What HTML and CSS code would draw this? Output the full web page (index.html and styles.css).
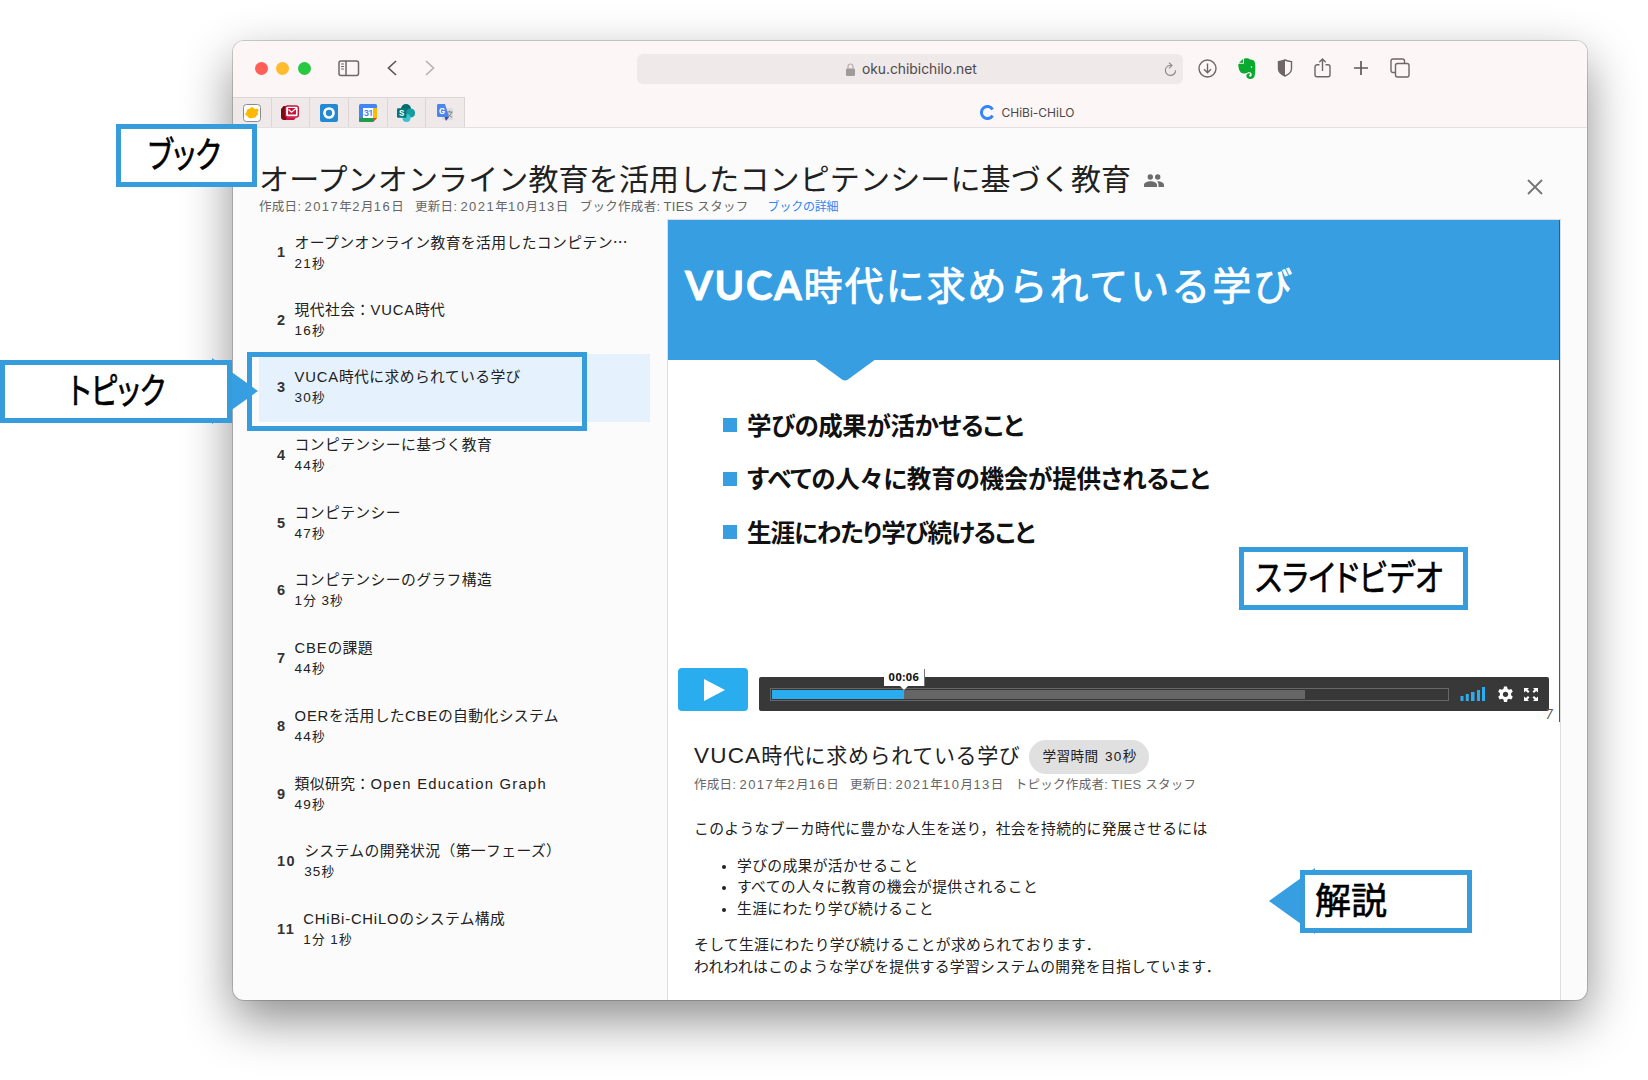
FILE: index.html
```html
<!DOCTYPE html>
<html lang="ja">
<head>
<meta charset="utf-8">
<title>CHiBi-CHiLO</title>
<link rel="stylesheet" href="styles.css">
</head>
<body>
<div class="window">
  <header class="chrome">
    <div class="toolbar">
      <div class="lights"><i class="red"></i><i class="yellow"></i><i class="green"></i></div>
      <svg class="ic-sidebar" width="22" height="17" viewBox="0 0 22 17" fill="none" stroke="#6f6667" stroke-width="1.5"><rect x="1" y="1" width="19.5" height="14.5" rx="2"/><path d="M8 1v14.500"/><path d="M3 4h3M3 6.500h3M3 9h3" stroke-width="1"/></svg>
      <svg class="ic-back" width="10" height="16" viewBox="0 0 10 16" fill="none" stroke="#5f5758" stroke-width="1.700"><path d="M9 1 1.500 8 9 15"/></svg>
      <svg class="ic-fwd" width="10" height="16" viewBox="0 0 10 16" fill="none" stroke="#b9b2b2" stroke-width="1.700"><path d="M1 1 8.500 8 1 15"/></svg>
      <div class="address">
        <svg width="9" height="13" viewBox="0 0 9 13"><rect y="5.500" width="9" height="7.500" rx="1.200" fill="#a09a9a"/><path d="M2 6V3.500a2.500 2.500 0 0 1 5 0V6" fill="none" stroke="#b5afaf" stroke-width="1.200"/></svg>
        <span>oku.chibichilo.net</span>
        <svg class="reload" width="13" height="15" viewBox="0 0 13 15" fill="none" stroke="#8d8687" stroke-width="1.100"><path d="M7.500 3.300A5.100 5.100 0 1 0 11.600 8.300M5 .700 8 3.500 5 6.300"/></svg>
      </div>
      <div class="tools">
        <svg width="19" height="19" viewBox="0 0 19 19" fill="none" stroke="#6f6667" stroke-width="1.400"><circle cx="9.500" cy="9.500" r="8.500"/><path d="M9.500 4.500v9M6 10.200l3.500 3.500 3.500-3.500"/></svg>
        <svg width="18" height="21" viewBox="0 0 18 21"><path d="M6 .800C8 0 11 .300 12 1.600c3 .100 4.500.900 4.900 3 .800 4.500.500 9.500-.300 13.400-.500 2.100-1.900 2.900-4.300 2.900-2.500 0-3.900-1.100-3.900-2.900s1.300-2.900 3.500-2.600v1.700c-1.200-.100-1.400 1.400.200 1.400 1.500 0 1.700-.900 1.500-2.600-.200-1.200-1.500-1.600-3.500-1.800-.800 1.500-3.300 1.700-5.400 1.200C1.900 14.600.700 11.300.300 7.400.100 6 .700 5.700 2 5.700h3.300c.500 0 .700-.200.700-.700z" fill="#0aaa31"/><path d="M1 4.800 5 1v3.800z" fill="#0aaa31"/><circle cx="13.500" cy="9" r=".8" fill="#fcf6f6"/></svg>
        <svg width="16" height="18" viewBox="0 0 16 18"><path d="M8 1c2 1 4 1.400 6.500 1.600v7.100c0 3.500-2.300 5.500-6.500 7.300-4.200-1.800-6.500-3.800-6.500-7.300V2.600C4 2.400 6 2 8 1z" fill="none" stroke="#6f6667" stroke-width="1.400"/><path d="M8 1v16c-4.200-1.800-6.500-3.800-6.500-7.300V2.600C4 2.400 6 2 8 1z" fill="#6f6667"/></svg>
        <svg width="17" height="20" viewBox="0 0 17 20" fill="none" stroke="#6f6667" stroke-width="1.400"><path d="M5.500 6.800H3a2 2 0 0 0-2 2v8a2 2 0 0 0 2 2h11a2 2 0 0 0 2-2v-8a2 2 0 0 0-2-2h-2.500M8.500 13V1.200M5.300 4.300l3.200-3.200 3.200 3.200"/></svg>
        <svg class="plus" width="14" height="14" viewBox="0 0 14 14" stroke="#5f5758" stroke-width="1.700"><path d="M7 0v14M0 7h14"/></svg>
        <svg class="tabs" width="20" height="20" viewBox="0 0 20 20" fill="none" stroke="#6f6667" stroke-width="1.400"><path d="M5.500 14.500H3a2 2 0 0 1-2-2V3a2 2 0 0 1 2-2h9.500a2 2 0 0 1 2 2v2.500"/><rect x="5.500" y="5.500" width="13.500" height="13.500" rx="2"/></svg>
      </div>
    </div>
    <div class="tabbar">
      <nav class="pins">
        <span><svg width="18" height="18" viewBox="0 0 18 18"><rect x=".5" y=".5" width="17" height="17" rx="3" fill="#fff" stroke="#8f8a8a"/><path d="M5 5q2 0 3-1.500 1.200-1 2.500.5 1 1.300 3 .8 2.500-.3 2 1.700-1.500 1.500-.5 3 .3 1.700-1.500 2-.5 2.500-3 2.200-2 .8-4 .3-2-.5-2.200-2.200-2.800-.8-1.800-2.500 1.500-1.200 1-2.500z" fill="#fbb901"/></svg></span>
        <span><svg width="18" height="16" viewBox="0 0 18 16"><path d="M2.500 1H5v11l7 2.500v.5H3a3 3 0 0 1-3-3V4z" fill="#7a0b16"/><rect x="4.500" y="1" width="12.800" height="11" rx="2" fill="#fff" stroke="#c8143c" stroke-width="1.400"/><path d="M7 3h8v6.500H7z" fill="#c8143c"/><path d="m7.500 4.500 3 2.800L15 3.500" fill="none" stroke="#fff" stroke-width="1.200"/><path d="M5 12.500h10L13 15H5z" fill="#c8143c"/></svg></span>
        <span><svg width="18" height="18" viewBox="0 0 18 18"><rect width="18" height="18" rx="2" fill="#228ad2"/><circle cx="9" cy="9" r="4.500" fill="none" stroke="#fff" stroke-width="2.700"/></svg></span>
        <span><svg width="18" height="18" viewBox="0 0 18 18"><rect width="18" height="18" rx="1.500" fill="#4285f4"/><path d="M14 4h4v10h-4z" fill="#fbbc04"/><path d="M0 14h14v4H1.500A1.500 1.500 0 0 1 0 16.500z" fill="#1e9b4b"/><path d="M18 14v4h-4z" fill="#efe9e9"/><path d="m14 18 4-4h-4z" fill="#ea4335"/><path d="M4 4h10v10H4z" fill="#fff"/><text x="9" y="12" text-anchor="middle" class="cal">31</text></svg></span>
        <span><svg width="18" height="18" viewBox="0 0 18 18"><circle cx="9" cy="5" r="5" fill="#036c70"/><circle cx="13.500" cy="9" r="4.600" fill="#1a9ba1"/><circle cx="9.500" cy="14" r="4" fill="#37c6d0"/><rect y="4.300" width="9.500" height="9.500" rx="1" fill="#03787c"/><text x="4.700" y="12" text-anchor="middle" class="sp">S</text></svg></span>
        <span><svg width="18" height="18" viewBox="0 0 18 18"><rect x="6" y="4" width="11" height="12" rx="1" fill="#dcdcdc"/><path d="M2 0h7l4 13H2.500A1.500 1.500 0 0 1 1 11.500V1.500A1.500 1.500 0 0 1 2 0z" fill="#4a86ee"/><path d="m8.500 13h4.500l-3 4z" fill="#3949ab"/><text x="6" y="9.500" text-anchor="middle" class="tr">G</text><path d="M11 8h5.500M13.500 6.700V8M15.500 8c-.500 2.500-2 4-3.500 5.200M12 9.500c.800 1.700 2 3 4 3.800" fill="none" stroke="#6b7a80" stroke-width=".9"/></svg></span>
      </nav>
      <div class="tab"><svg width="14" height="15" viewBox="0 0 14 15"><path d="M12.600 10.600A6 6 0 1 1 12.600 4.400" fill="none" stroke="#3487fb" stroke-width="3"/></svg><span>CHiBi-CHiLO</span></div>
    </div>
  </header>

  <main class="page">
    <div class="book-head">
      <div>
        <h1>オープンオンライン教育を活用したコンピテンシーに基づく教育<svg width="20" height="14" viewBox="0 0 20 14" fill="#6c6c6c"><circle cx="6.300" cy="3" r="2.700"/><circle cx="13.700" cy="3" r="2.700"/><path d="M0 13v-2c0-2.500 3.500-3.700 6.500-3.700S13 8.500 13 11v2zM13 7.300c3-.200 7 1 7 3.700v2h-5.500v-2c0-1.500-.500-2.700-1.500-3.700z"/></svg></h1>
        <div class="meta"><span>作成日<em>:</em><b>2017</b>年<b>2</b>月<b>16</b>日</span><span>更新日<em>:</em><b>2021</b>年<b>10</b>月<b>13</b>日</span><span>ブック作成者<em>:</em><b class="word">TIES</b> スタッフ</span><a>ブックの詳細</a></div>
      </div>
      <svg class="close" width="16" height="16" viewBox="0 0 16 16" stroke="#757575" stroke-width="1.800"><path d="m1 1 14 14M15 1 1 15"/></svg>
    </div>
    <div class="columns">
      <ol class="topics">
        <li><span class="no">1</span><div><p>オープンオンライン教育を活用したコンピテン<b class="dots">…</b></p><small><b>21</b>秒</small></div></li>
        <li><span class="no">2</span><div><p>現代社会：<b>VUCA</b>時代</p><small><b>16</b>秒</small></div></li>
        <li class="active"><span class="no">3</span><div><p><b>VUCA</b>時代に求められている学び</p><small><b>30</b>秒</small></div></li>
        <li><span class="no">4</span><div><p>コンピテンシーに基づく教育</p><small><b>44</b>秒</small></div></li>
        <li><span class="no">5</span><div><p>コンピテンシー</p><small><b>47</b>秒</small></div></li>
        <li><span class="no">6</span><div><p>コンピテンシーのグラフ構造</p><small><b>1</b>分 <b>3</b>秒</small></div></li>
        <li><span class="no">7</span><div><p><b>CBE</b>の課題</p><small><b>44</b>秒</small></div></li>
        <li><span class="no">8</span><div><p><b>OER</b>を活用した<b>CBE</b>の自動化システム</p><small><b>44</b>秒</small></div></li>
        <li><span class="no">9</span><div><p>類似研究：<b class="wide">Open Education Graph</b></p><small><b>49</b>秒</small></div></li>
        <li><span class="no">10</span><div><p>システムの開発状況（第一フェーズ）</p><small><b>35</b>秒</small></div></li>
        <li><span class="no">11</span><div><p><b>CHiBi-CHiLO</b>のシステム構成</p><small><b>1</b>分 <b>1</b>秒</small></div></li>
      </ol>
      <article class="paper">
        <section class="video">
          <div class="band"><b>VUCA</b>時代に求められている学び</div>
          <svg class="notch" width="62" height="22" viewBox="0 0 62 22"><path d="M0 0h62L34 20.500q-3 1.800-6 0z" fill="#379fe1"/></svg>
          <ul class="points">
            <li class="p1">学びの成果が活かせること</li>
            <li class="p2">すべての人々に教育の機会が提供されること</li>
            <li class="p3">生涯にわたり学び続けること</li>
          </ul>
          <div class="player">
            <div class="play"><svg width="21" height="22" viewBox="0 0 21 22"><path d="M0 0 21 11 0 22z" fill="#fff"/></svg></div>
            <div class="controls">
              <div class="track"><div class="buffer"></div><div class="played"></div><div class="time">00:06</div></div>
              <svg class="vol" width="26" height="14" viewBox="0 0 26 14" fill="#29adef"><path d="M.5 9h3v5h-3zM5.800 7h3v7h-3zM11 5h3.500v9H11zM17 3h3v11h-3zM22 0h3v14h-3z"/></svg>
              <svg class="gear" width="17" height="17" viewBox="0 0 17 17"><path d="M7 .5h3l.5 2.300 1.500.9 2.300-.8 1.500 2.700-1.700 1.600v2l1.700 1.600-1.500 2.700-2.300-.8-1.500.9-.5 2.400H7l-.5-2.400-1.500-.9-2.300.8-1.500-2.700L2.900 9.200v-2L1.200 5.600l1.500-2.700 2.300.8 1.500-.9z" fill="#fff"/><circle cx="8.500" cy="8.300" r="2.600" fill="#383838"/></svg>
              <svg width="14" height="13" viewBox="0 0 14 13" fill="#fff"><path d="M0 0h5L3.500 1.500 5.500 3.500 4 5 1.800 3 0 4.500zM14 0H9l1.500 1.500L8.500 3.500 10 5l2.200-2L14 4.500zM0 13h5l-1.500-1.500 2-2L4 8l-2.200 2L0 8.500zM14 13H9l1.500-1.500-2-2L10 8l2.200 2L14 8.500z"/></svg>
            </div>
          </div>
          <span class="page-no">7</span>
        </section>
        <section class="detail">
          <div class="topic-title"><h2><b>VUCA</b>時代に求められている学び</h2><span class="chip">学習時間 <b>30</b>秒</span></div>
          <div class="meta"><span>作成日<em>:</em><b>2017</b>年<b>2</b>月<b>16</b>日</span><span>更新日<em>:</em><b>2021</b>年<b>10</b>月<b>13</b>日</span><span>トピック作成者<em>:</em><b class="word">TIES</b> スタッフ</span></div>
          <div class="body">
            <p>このようなブーカ時代に豊かな人生を送り，社会を持続的に発展させるには</p>
            <ul><li>学びの成果が活かせること</li><li>すべての人々に教育の機会が提供されること</li><li>生涯にわたり学び続けること</li></ul>
            <p>そして生涯にわたり学び続けることが求められております．<br>われわれはこのような学びを提供する学習システムの開発を目指しています．</p>
          </div>
        </section>
      </article>
    </div>
  </main>
</div>

<div class="focus-box"></div>
<div class="callout c-book"><span>ブック</span></div>
<svg class="arrow a-topic" width="46" height="66" viewBox="0 0 46 66"><path d="M0 0 46 33 0 66z" fill="#379fe1"/></svg>
<div class="callout c-topic"><span>トピック</span></div>
<div class="callout c-video"><span>スライドビデオ</span></div>
<svg class="arrow a-note" width="46" height="66" viewBox="0 0 46 66"><path d="M46 0 0 33l46 33z" fill="#379fe1"/></svg>
<div class="callout c-note"><span>解説</span></div>
</body>
</html>
```
FILE: styles.css
```css
* { box-sizing: border-box; }
html, body { margin: 0; height: 1080px; overflow: hidden; background: #fff; }
body {
  position: relative;
  padding: 41px 0 0 233px;
  font-family: "Liberation Sans", "Noto Sans CJK JP", sans-serif;
  color: #212121;
}
svg { display: block; flex: none; }
b { font-weight: inherit; }
h1, h2, p, ol, ul { margin: 0; padding: 0; font-weight: 400; }

.window {
  width: 1354px; height: 959px;
  display: flex; flex-direction: column;
  border-radius: 11px; overflow: hidden;
  background: #fbfbfb;
  box-shadow: 0 0 0 1px rgba(0,0,0,.17), 0 20px 50px rgba(0,0,0,.45);
}

/* Browser chrome */
.chrome { flex: none; height: 87px; background: #fcf6f6; border-bottom: 1px solid #e4e0e0; }
.toolbar { height: 56px; display: flex; align-items: center; padding-left: 21.500px; }
.lights { display: flex; gap: 8.500px; width: 83.500px; }
.lights i { width: 13px; height: 13px; border-radius: 50%; }
.lights, .ic-sidebar, .ic-back, .ic-fwd, .tools { margin-bottom: 1.500px; }
.red { background: #ff5f57; }
.yellow { background: #febc2e; }
.green { background: #28c840; }
.ic-back { margin-left: 27px; }
.ic-fwd { margin-left: 28px; }
.address {
  display: flex; align-items: center; justify-content: flex-start;
  width: 546px; height: 30px; margin-left: 202px; padding: 0 6px 0 209px;
  border-radius: 6px; background: #efe9e9; color: #4d4748;
  font: 13.800px/30px Inter, sans-serif;
}
.address span { margin-left: 7px; }
.reload { margin-left: auto; }
.tools { display: flex; align-items: center; margin-left: 15px; gap: 21px; }
.plus { margin-left: 2px; }
.tabs { margin-left: 1px; }
.tabbar { display: flex; height: 30px; }
.pins { display: flex; width: 232px; border-top: 1px solid #dcd6d6; background: #efe9e9; }
.pins span { width: 38.660px; display: flex; align-items: center; justify-content: center; border-right: 1.500px solid #dcd6d6; }
.cal { font: bold 8px Inter, sans-serif; fill: #4285f4; }
.sp { font: bold 8px Inter, sans-serif; fill: #fff; }
.tr { font: bold 8px Inter, sans-serif; fill: #fff; }
.tab { flex: 1; display: flex; align-items: center; justify-content: center; gap: 7px; padding-left: 3px; font: 12px/31px Inter, sans-serif; color: #4d4748; }

/* Book page */
.page { flex: 1; display: flex; flex-direction: column; min-height: 0; }
.book-head { height: 91px; padding: 33px 44px 0 26px; display: flex; justify-content: space-between; }
h1 { display: flex; align-items: center; font-size: 30px; line-height: 38px; letter-spacing: .14px; }
h1 svg { margin: 2px 0 0 13px; }
.close { margin-top: 18px; }
.meta { display: flex; gap: 11px; font-size: 12.500px; line-height: 16px; letter-spacing: .3px; color: #666; white-space: nowrap; }
.meta b { font-size: 13px; letter-spacing: 1.500px; }
.meta .word { letter-spacing: .3px; }
.meta em { display: inline-block; width: 7px; font-style: normal; }
.meta a { margin-left: 8px; font-size: 12px; letter-spacing: -.2px; color: #2f86f6; }
.columns { flex: 1; display: flex; min-height: 0; }
.topics { width: 434px; padding: 0 17px 0 26px; list-style: none; }
.topics li { display: flex; height: 67.700px; padding: 12px 0 0 18px; }
.topics .active { background: #e5f1fd; }
.no { margin: 11px 8px 0 0; font: bold 14.500px/20px "Liberation Sans", sans-serif; letter-spacing: 1.500px; color: #333; }
.topics p { font-size: 14.800px; line-height: 22px; letter-spacing: .4px; white-space: nowrap; }
.topics p b { letter-spacing: .8px; }
.topics p .wide { letter-spacing: 1.250px; }
.topics p .dots { font-family: "Noto Sans CJK JP", sans-serif; }
.topics small { display: block; font-size: 12.600px; line-height: 20px; word-spacing: 2px; }
.topics small b { font-size: 13.500px; letter-spacing: 1.200px; }

.paper { width: 894px; border: 1px solid #ddd; border-bottom: 0; background: #fff; }
.video { position: relative; height: 502px; border-right: 1px solid #555; display: flex; flex-direction: column; }
.band {
  flex: none; height: 140px; padding: 41px 0 0 17px;
  background: #379fe1; color: #fff;
  font-size: 39px; line-height: 48px; letter-spacing: 2px; white-space: nowrap;
  -webkit-text-stroke: .8px #fff;
}
.band b { font-family: Lato, sans-serif; font-size: 40px; font-weight: 700; letter-spacing: 1.700px; }
.notch { margin-left: 146px; margin-top: -1px; }
.points { list-style: none; padding: 16.500px 0 0 55px; color: #111; }
.points li { display: flex; align-items: center; gap: 10px; height: 53.600px; font-size: 24.500px; font-weight: 700; font-feature-settings: "palt"; white-space: nowrap; }
.points li::before { content: ""; width: 14px; height: 14px; margin-top: 2px; background: #379fe1; }
.p1 { letter-spacing: -.400px; }
.p2 { letter-spacing: -.200px; }
.p3 { letter-spacing: -1px; }
.player { display: flex; align-items: flex-end; gap: 11px; margin: auto 10px 11px; }
.play { width: 70px; height: 43px; display: flex; align-items: center; justify-content: center; padding-left: 3px; border-radius: 4px; background: #29adef; }
.controls { flex: 1; display: flex; align-items: center; height: 34px; padding: 0 10px 0 11px; border-radius: 2px; background: #383838; }
.track { position: relative; width: 679px; height: 13px; border: 1px solid #666; margin-right: 11px; }
.buffer, .played { position: absolute; left: 1px; top: 1px; bottom: 1px; }
.buffer { width: 533px; background: #666; }
.played { width: 132px; background: #29adef; }
.time { position: absolute; left: 113px; top: -20px; width: 41px; height: 17px; background: #fff; border-right: 1px solid #777; color: #111; font: bold 11px/16px "Open Sans", sans-serif; letter-spacing: .5px; text-align: center; }
.time::after { content: ""; position: absolute; left: 16px; top: 17px; border: 4px solid transparent; border-top-color: #fff; border-bottom: 0; }
.gear { margin: 0 10px 0 11px; }
.page-no { position: absolute; right: 6px; bottom: 0; font: italic 13px/16px Lato, sans-serif; color: #555; }

.detail { padding: 18px 26px 0; }
.topic-title { display: flex; align-items: center; gap: 9px; height: 34px; }
h2 { font-size: 21px; line-height: 30px; padding-bottom: 2px; letter-spacing: .65px; white-space: nowrap; }
h2 b { font-size: 22.500px; letter-spacing: 1.200px; }
.chip { height: 34px; padding: 0 12px 0 13px; border-radius: 17px; background: #e0e0e0; font-size: 13.600px; line-height: 34px; letter-spacing: .45px; word-spacing: 2px; white-space: nowrap; }
.chip b { letter-spacing: 1.300px; }
.detail .meta { margin-top: 3px; }
.body { margin-top: 26px; font-size: 14.800px; line-height: 21.500px; letter-spacing: .34px; white-space: nowrap; }
.body ul { margin: 15px 0; padding-left: 43px; }

/* Annotations laid over the window */
.callout { position: absolute; display: flex; align-items: center; height: 63px; border: 5px solid #379cdc; background: #fff; color: #000; font-size: 36px; line-height: 50px; font-feature-settings: "palt"; white-space: nowrap; -webkit-text-stroke: .6px #000; }
.callout span { transform-origin: left; transform: scaleX(.79); }
.c-book { left: 116px; top: 124px; width: 141px; padding-left: 27px; }
.c-topic { left: 0; top: 360px; width: 232px; padding-left: 64px; }
.c-video { left: 1239px; top: 547px; width: 229px; padding-left: 11px; }
.c-video span { transform: scaleX(.84); }
.c-note { left: 1300px; top: 870px; width: 172px; padding-left: 10px; }
.c-note span { transform: none; }
.focus-box { position: absolute; left: 247px; top: 352px; width: 340px; height: 79px; border: 5px solid #379cdc; }
.arrow { position: absolute; }
.a-topic { left: 212px; top: 358px; }
.a-note { left: 1269px; top: 868px; }
```
